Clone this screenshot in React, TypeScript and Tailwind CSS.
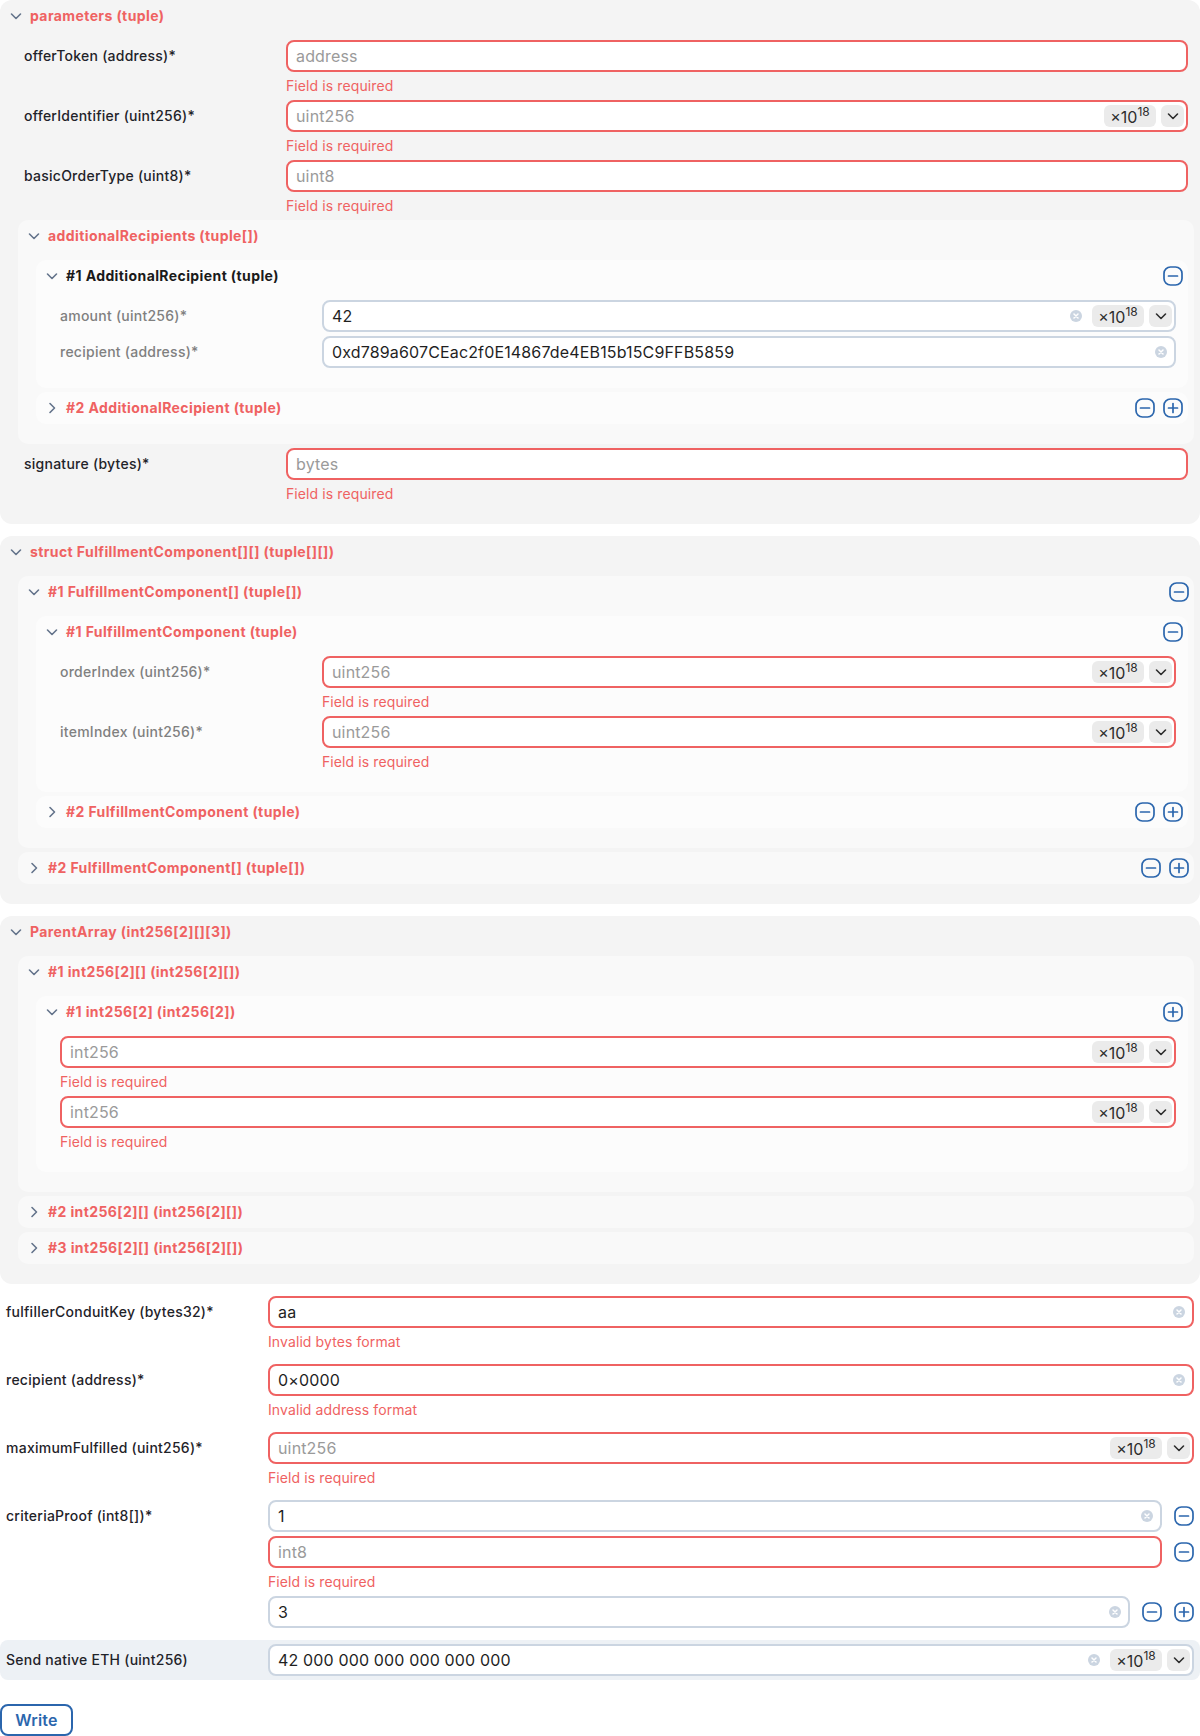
import React from "react";

const RED_TEXT = "text-[#ef6262]";

function ChevronDown({ className = "stroke-[#64748b]" }: { className?: string }) {
  return (
    <svg width="12" height="12" viewBox="0 0 12 12" fill="none" className={className}>
      <path d="M1.5 4 L6 8.5 L10.5 4" strokeWidth="1.6" strokeLinecap="round" strokeLinejoin="round" />
    </svg>
  );
}

function ChevronRight() {
  return (
    <svg width="12" height="12" viewBox="0 0 12 12" fill="none" className="stroke-[#64748b]">
      <path d="M4 1.5 L8.5 6 L4 10.5" strokeWidth="1.6" strokeLinecap="round" strokeLinejoin="round" />
    </svg>
  );
}

function SquareIcon({ plus }: { plus?: boolean }) {
  return (
    <svg width="20" height="20" viewBox="0 0 20 20" fill="none" className="stroke-[#2b66ad] shrink-0">
      <rect x="1" y="1" width="18" height="18" rx="6.5" strokeWidth="1.7" />
      <path d="M5.5 10 H14.5" strokeWidth="1.7" strokeLinecap="round" />
      {plus && <path d="M10 5.5 V14.5" strokeWidth="1.7" strokeLinecap="round" />}
    </svg>
  );
}

function ClearIcon() {
  return (
    <svg width="12" height="12" viewBox="0 0 12 12" className="shrink-0">
      <circle cx="6" cy="6" r="6" fill="#cbd5e1" />
      <path d="M4 4 L8 8 M8 4 L4 8" stroke="#ffffff" strokeWidth="1.5" strokeLinecap="round" />
    </svg>
  );
}

type InputProps = {
  value?: string;
  placeholder?: string;
  error?: boolean;
  badge?: boolean;
  clear?: boolean;
};

function Input({ value, placeholder, error, badge, clear }: InputProps) {
  return (
    <div
      className={`flex h-8 items-center rounded-lg border-2 bg-white pl-2 ${
        badge ? "pr-0.5" : "pr-[7px]"
      } ${error ? "border-[#ef6262]" : "border-[#cbd5e1]"}`}
    >
      <span
        className={`min-w-0 flex-1 truncate text-base leading-6 tracking-[0.15px] ${
          value ? "text-[#1f1f1f]" : "text-[#9a9a9a]"
        }`}
      >
        {value || placeholder}
      </span>
      {clear && (
        <span className={badge ? "mr-2.5 flex" : "flex"}>
          <ClearIcon />
        </span>
      )}
      {badge && (
        <div className="flex items-center gap-[5px]">
          <span className="flex h-[22px] w-[52px] items-center justify-center rounded-md bg-[#ebebeb] text-base leading-none text-[#2d2d2d]">
            <span className="relative top-[1px]">×10</span>
            <span className="relative -top-[4px] text-[12px] leading-none">18</span>
          </span>
          <span className="flex h-[22px] w-[23px] items-center justify-center rounded-md bg-[#ebebeb]">
            <ChevronDown className="stroke-[#2d2d2d]" />
          </span>
        </div>
      )}
    </div>
  );
}

function ErrorText({ text = "Field is required" }: { text?: string }) {
  return <div className={`mt-1 text-sm leading-5 tracking-[0.1px] ${RED_TEXT}`}>{text}</div>;
}

function Row({
  label,
  gray,
  children,
}: {
  label: string;
  gray?: boolean;
  children: React.ReactNode;
}) {
  return (
    <div className="flex px-1.5">
      <div
        className={`flex h-8 w-[262px] shrink-0 items-center text-sm font-medium tracking-[0.25px] ${
          gray ? "text-[#808080]" : "text-[#1f2329]"
        }`}
      >
        {label}
      </div>
      <div className="min-w-0 flex-1">{children}</div>
    </div>
  );
}

function Panel({
  level,
  title,
  dark,
  open,
  actions,
  children,
}: {
  level: 1 | 2 | 3;
  title: string;
  dark?: boolean;
  open?: boolean;
  actions?: React.ReactNode;
  children?: React.ReactNode;
}) {
  const bg =
    level === 1
      ? "bg-[#f4f4f4] rounded-xl"
      : level === 2
      ? "bg-[#f9f9f9] rounded-[10px]"
      : "bg-[#fcfcfc] rounded-[10px]";
  return (
    <div className={bg}>
      <div className="flex h-8 items-center pl-[10px] pr-[5px]">
        <span className="flex w-3 items-center justify-center">{open ? <ChevronDown /> : <ChevronRight />}</span>
        <span className={`ml-2 text-sm font-bold tracking-[0.4px] ${dark ? "text-[#1a1a1a]" : RED_TEXT}`}>{title}</span>
        {actions && <div className="ml-auto flex items-center gap-2">{actions}</div>}
      </div>
      {open && <div className="flex flex-col gap-1 pb-5 pl-[18px] pr-1.5 pt-2">{children}</div>}
    </div>
  );
}

export default function App() {
  return (
    <div className="flex w-[1200px] flex-col gap-3 bg-white font-['Inter','Noto_Sans',sans-serif]">
      <Panel level={1} title="parameters (tuple)" open>
        <Row label="offerToken (address)*">
          <Input placeholder="address" error />
          <ErrorText />
        </Row>
        <Row label="offerIdentifier (uint256)*">
          <Input placeholder="uint256" error badge />
          <ErrorText />
        </Row>
        <Row label="basicOrderType (uint8)*">
          <Input placeholder="uint8" error />
          <ErrorText />
        </Row>
        <Panel level={2} title="additionalRecipients (tuple[])" open>
          <Panel level={3} title="#1 AdditionalRecipient (tuple)" dark open actions={<SquareIcon />}>
            <Row label="amount (uint256)*" gray>
              <Input value="42" clear badge />
            </Row>
            <Row label="recipient (address)*" gray>
              <Input value="0xd789a607CEac2f0E14867de4EB15b15C9FFB5859" clear />
            </Row>
          </Panel>
          <Panel
            level={3}
            title="#2 AdditionalRecipient (tuple)"
            actions={
              <>
                <SquareIcon />
                <SquareIcon plus />
              </>
            }
          />
        </Panel>
        <Row label="signature (bytes)*">
          <Input placeholder="bytes" error />
          <ErrorText />
        </Row>
      </Panel>

      <Panel level={1} title="struct FulfillmentComponent[][] (tuple[][])" open>
        <Panel level={2} title="#1 FulfillmentComponent[] (tuple[])" open actions={<SquareIcon />}>
          <Panel level={3} title="#1 FulfillmentComponent (tuple)" open actions={<SquareIcon />}>
            <Row label="orderIndex (uint256)*" gray>
              <Input placeholder="uint256" error badge />
              <ErrorText />
            </Row>
            <Row label="itemIndex (uint256)*" gray>
              <Input placeholder="uint256" error badge />
              <ErrorText />
            </Row>
          </Panel>
          <Panel
            level={3}
            title="#2 FulfillmentComponent (tuple)"
            actions={
              <>
                <SquareIcon />
                <SquareIcon plus />
              </>
            }
          />
        </Panel>
        <Panel
          level={2}
          title="#2 FulfillmentComponent[] (tuple[])"
          actions={
            <>
              <SquareIcon />
              <SquareIcon plus />
            </>
          }
        />
      </Panel>

      <Panel level={1} title="ParentArray (int256[2][][3])" open>
        <Panel level={2} title="#1 int256[2][] (int256[2][])" open>
          <Panel level={3} title="#1 int256[2] (int256[2])" open actions={<SquareIcon plus />}>
            <div className="px-1.5">
              <Input placeholder="int256" error badge />
              <ErrorText />
            </div>
            <div className="px-1.5">
              <Input placeholder="int256" error badge />
              <ErrorText />
            </div>
          </Panel>
        </Panel>
        <Panel level={2} title="#2 int256[2][] (int256[2][])" />
        <Panel level={2} title="#3 int256[2][] (int256[2][])" />
      </Panel>

      <Row label="fulfillerConduitKey (bytes32)*">
        <Input value="aa" error clear />
        <ErrorText text="Invalid bytes format" />
      </Row>
      <Row label="recipient (address)*">
        <Input value="0×0000" error clear />
        <ErrorText text="Invalid address format" />
      </Row>
      <Row label="maximumFulfilled (uint256)*">
        <Input placeholder="uint256" error badge />
        <ErrorText />
      </Row>
      <Row label="criteriaProof (int8[])*">
        <div className="flex flex-col gap-1">
          <div className="flex items-center gap-3">
            <div className="min-w-0 flex-1">
              <Input value="1" clear />
            </div>
            <SquareIcon />
          </div>
          <div>
            <div className="flex items-center gap-3">
              <div className="min-w-0 flex-1">
                <Input placeholder="int8" error />
              </div>
              <SquareIcon />
            </div>
            <ErrorText />
          </div>
          <div className="flex items-center gap-3">
            <div className="min-w-0 flex-1">
              <Input value="3" clear />
            </div>
            <div className="flex items-center gap-3">
              <SquareIcon />
              <SquareIcon plus />
            </div>
          </div>
        </div>
      </Row>

      <div className="flex items-center rounded-lg bg-[#edf1f5] px-1.5 py-1">
        <div className="flex h-8 w-[262px] shrink-0 items-center text-sm font-medium tracking-[0.25px] text-[#1f2329]">
          Send native ETH (uint256)
        </div>
        <div className="min-w-0 flex-1">
          <Input value="42 000 000 000 000 000 000" clear badge />
        </div>
      </div>

      <div className="mt-3">
        <button className="h-8 w-[73px] rounded-lg border-2 border-[#2b66ad] text-base font-semibold tracking-[0.2px] text-[#2b66ad]">
          Write
        </button>
      </div>
    </div>
  );
}
